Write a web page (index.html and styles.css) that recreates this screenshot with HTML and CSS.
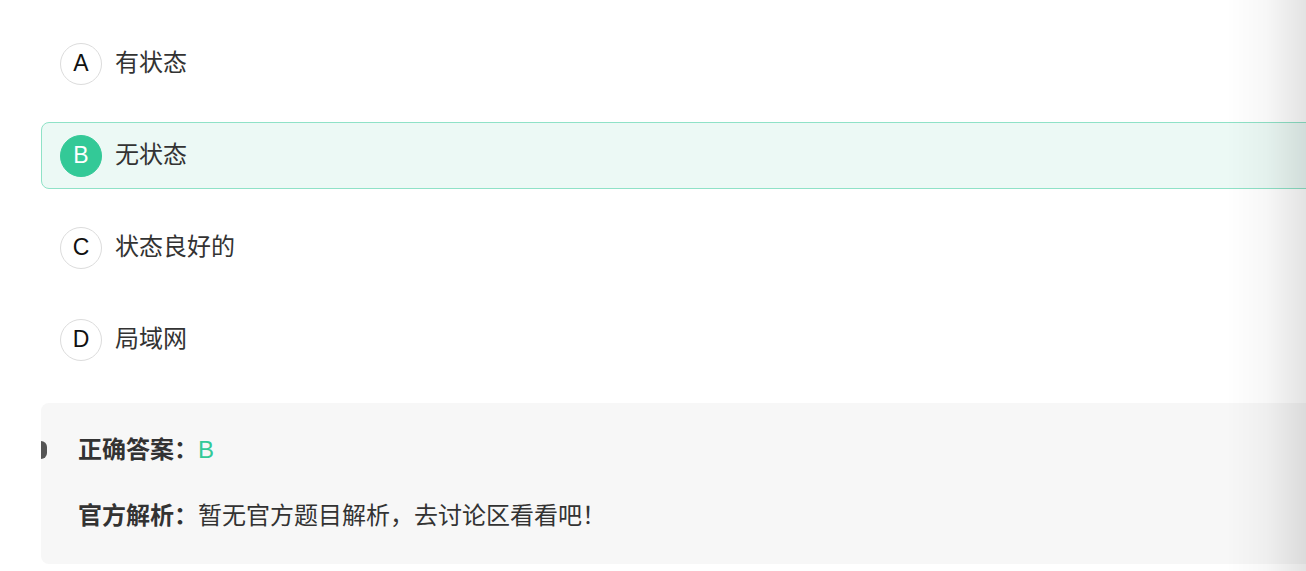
FILE: index.html
```
<!DOCTYPE html>
<html lang="zh-CN">
<head>
  <meta charset="UTF-8">
  <meta name="viewport" content="width=device-width, initial-scale=1.0">
  <title>题目</title>
  <link rel="stylesheet" href="styles.css">
</head>
<body>
  <div class="question">
    <ul class="options">
      <li class="option"><span class="letter">A</span><span class="text">有状态</span></li>
      <li class="option selected"><span class="letter">B</span><span class="text">无状态</span></li>
      <li class="option"><span class="letter">C</span><span class="text">状态良好的</span></li>
      <li class="option"><span class="letter">D</span><span class="text">局域网</span></li>
    </ul>

    <div class="analysis">
      <span class="marker"></span>
      <p class="row"><b>正确答案：</b><span class="answer">B</span></p>
      <p class="row"><b>官方解析：</b>暂无官方题目解析，去讨论区看看吧！</p>
    </div>
  </div>
  <div class="edge-shade"></div>
</body>
</html>
```

FILE: styles.css
```
/* 页面底色 */
html, body {
  overflow: hidden;
}
body {
  margin: 0;
  padding: 30px 0 0 41px;
  background: #fff;
  color: #333;
  font-family: "Liberation Sans", Arial, "Noto Sans CJK SC", sans-serif;
}
.question {
  width: 1320px;
}
.options {
  list-style: none;
  margin: 0;
  padding: 0;
}
.option {
  display: flex;
  align-items: center;
  box-sizing: border-box;
  height: 67px;
  margin-bottom: 25px;
  padding: 0 18px;
  border: 1px solid transparent;
  border-radius: 8px;
}
.letter {
  display: flex;
  align-items: center;
  justify-content: center;
  box-sizing: border-box;
  width: 42px;
  height: 42px;
  border: 1px solid #dcdcdc;
  border-radius: 50%;
  font-size: 23px;
  line-height: 1;
  color: #111;
  background: #fff;
}
.text {
  margin-left: 13px;
  padding-bottom: 5px;
  font-family: "Noto Sans CJK SC", sans-serif;
  font-size: 24px;
  line-height: 1;
  color: #333;
}
.option.selected {
  background: #ecf9f5;
  border-color: #8fe2c7;
}
.option.selected .letter {
  background: #33c997;
  border-color: #33c997;
  color: #fff;
}
/* 答案解析 */
.analysis {
  position: relative;
  margin-top: 30px;
  padding: 28px 37px 33px;
  background: #f7f7f7;
  border-radius: 8px;
}
.marker {
  position: absolute;
  left: 0;
  top: 38px;
  width: 6px;
  height: 18px;
  background: #555;
  border-radius: 0 9px 9px 0;
}
.row {
  margin: 0;
  font-family: "Noto Sans CJK SC", sans-serif;
  font-size: 24px;
  line-height: 34px;
}
.row + .row {
  margin-top: 30px;
}
.row b {
  font-weight: 600;
  color: #333;
}
.answer {
  font-family: "Liberation Sans", Arial, sans-serif;
  color: #33c997;
}
.edge-shade {
  position: fixed;
  top: 0;
  right: 0;
  width: 80px;
  height: 100%;
  background: linear-gradient(to right, rgba(0,0,0,0) 0%, rgba(0,0,0,0.03) 50%, rgba(0,0,0,0.11) 100%);
  pointer-events: none;
}
```
